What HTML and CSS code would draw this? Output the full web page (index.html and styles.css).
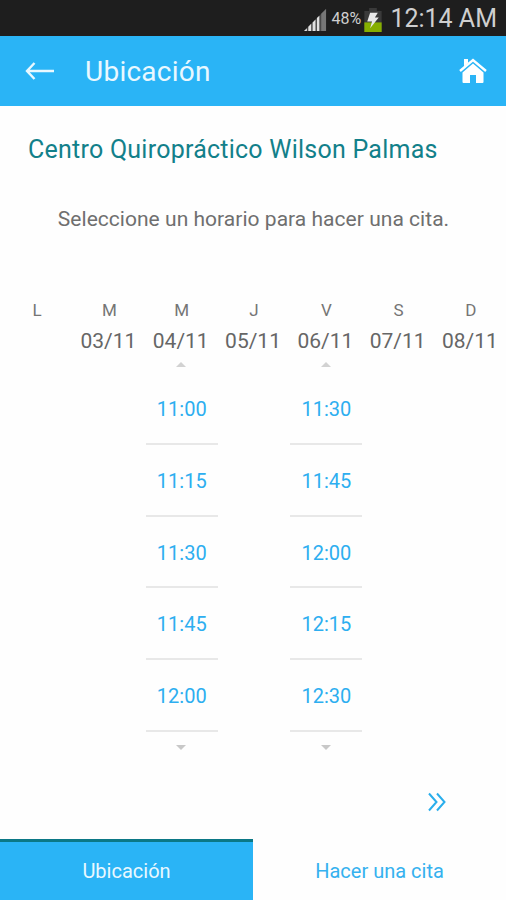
FILE: index.html
```
<!DOCTYPE html>
<html lang="es">
<head>
    <meta charset="UTF-8">
    <meta name="viewport" content="width=device-width, initial-scale=1.0">
    <title>Ubicación</title>
    <link rel="stylesheet" href="styles.css">
</head>
<body>
    <div class="status-bar">
        <svg class="signal" width="23" height="23" viewBox="0 0 24 24">
            <path d="M0 23L23 0V23Z" fill="#484848"/>
            <path d="M0 23L3 20V23ZM4.500 18.500L7.500 15.500V23H4.500ZM9 14L12 11V23H9ZM13.500 9.500L16 7V23H13.500Z" fill="#e2e2e2"/>
            <path d="M18 5L23 0V23H18Z" fill="#777"/>
        </svg>
        <span class="percent">48%</span>
        <svg class="battery" width="18" height="24" viewBox="0 0 18 25">
            <path d="M5 0H13V3H18V25H0V3H5Z" fill="#3a3a3a"/>
            <path d="M0 15H18V25H0Z" fill="#86ae00"/>
            <path d="M6 5H14L11 10H15L6 21L8 14H3Z" fill="#e8e8e8"/>
        </svg>
        <span class="clock">12:14 AM</span>
    </div>

    <header class="toolbar">
        <svg class="back" width="30" height="20" viewBox="0 0 30 20" fill="none" stroke="#e9f8ff" stroke-width="2.4">
            <path d="M9.500 2L2 10L9.500 18M2 10H29"/>
        </svg>
        <h1>Ubicación</h1>
        <svg class="home" width="28" height="26" viewBox="0 0 28 26">
            <path d="M1 13L14 2L27 13" fill="none" stroke="#fff" stroke-width="2.4"/>
            <path d="M5 1H9V5L5 8.500Z" fill="#fff"/>
            <path d="M14 5.500L24.500 14.500V24Q24.500 25 23.500 25H17V17H11V25H4.500Q3.500 25 3.500 24V14.500Z" fill="#fff"/>
        </svg>
    </header>

    <main>
        <h2>Centro Quiropráctico Wilson Palmas</h2>
        <p class="hint">Seleccione un horario para hacer una cita.</p>

        <div class="week">
            <div class="day">
                <span class="name">L</span>
            </div>
            <div class="day">
                <span class="name">M</span>
                <span class="date">03/11</span>
            </div>
            <div class="day">
                <span class="name">M</span>
                <span class="date">04/11</span>
                <span class="arrow up"></span>
                <ul class="hours">
                    <li>11:00</li>
                    <li>11:15</li>
                    <li>11:30</li>
                    <li>11:45</li>
                    <li>12:00</li>
                </ul>
                <span class="arrow down"></span>
            </div>
            <div class="day">
                <span class="name">J</span>
                <span class="date">05/11</span>
            </div>
            <div class="day">
                <span class="name">V</span>
                <span class="date">06/11</span>
                <span class="arrow up"></span>
                <ul class="hours">
                    <li>11:30</li>
                    <li>11:45</li>
                    <li>12:00</li>
                    <li>12:15</li>
                    <li>12:30</li>
                </ul>
                <span class="arrow down"></span>
            </div>
            <div class="day">
                <span class="name">S</span>
                <span class="date">07/11</span>
            </div>
            <div class="day">
                <span class="name">D</span>
                <span class="date">08/11</span>
            </div>
        </div>

        <svg class="next" width="20" height="20" viewBox="0 0 20 20" fill="none" stroke="#29aeec" stroke-width="2">
            <path d="M2 1.500L9.500 10L2 18.500M10 1.500L17.500 10L10 18.500"/>
        </svg>
    </main>

    <nav class="tabs">
        <a class="tab active">Ubicación</a>
        <a class="tab">Hacer una cita</a>
    </nav>
</body>
</html>
```
FILE: styles.css
```
* {
    box-sizing: border-box;
}
body {
    margin: 0;
    height: 900px;
    display: flex;
    flex-direction: column;
    overflow: hidden;
    background: #fefefe;
    font-family: Roboto, sans-serif;
}
.status-bar {
    height: 36px;
    display: flex;
    align-items: center;
    justify-content: flex-end;
    padding-right: 9px;
    background: #1e1e1e;
    color: #cfcfcf;
}
.signal {
    margin: 4px 4px 0 0;
}
.percent {
    width: 31px;
    font-size: 16px;
}
.battery {
    margin: 3px 8px 0 2px;
}
.clock {
    padding-top: 1px;
    font-size: 25px;
    line-height: 36px;
    white-space: nowrap;
}
.toolbar {
    height: 70px;
    display: flex;
    align-items: center;
    padding: 0 19px 0 25px;
    background: #2ab4f6;
}
h1 {
    flex: 1;
    margin: 0 0 0 30px;
    font-size: 28px;
    font-weight: 400;
    letter-spacing: 0.25px;
    color: #e9f8ff;
}
main {
    flex: 1;
    display: flex;
    flex-direction: column;
}
h2 {
    margin: 29px 0 0 28px;
    font-size: 25px;
    line-height: 30px;
    font-weight: 400;
    letter-spacing: 0.24px;
    color: #12808a;
}
.hint {
    margin: 41px 0 0 1px;
    font-size: 21px;
    line-height: 26px;
    letter-spacing: 0.03px;
    text-align: center;
    color: #6f6f6f;
}
.week {
    display: grid;
    grid-template-columns: repeat(7, 72.3px);
    margin: 68px 0 0 1px;
}
.day {
    display: flex;
    flex-direction: column;
    align-items: center;
}
.name {
    font-size: 17px;
    line-height: 20px;
    color: #757575;
}
.date {
    margin: 8px 2px 0 0;
    font-size: 21px;
    line-height: 26px;
    color: #666;
}
.arrow {
    margin-right: 1px;
    border: 5px solid transparent;
}
.up {
    margin-top: 8px;
    border-top: 0;
    border-bottom-color: #d2d2d2;
}
.down {
    margin-top: 13px;
    border-bottom: 0;
    border-top-color: #c8c8c8;
}
.hours {
    width: 100%;
    margin: 6px 0 0;
    padding: 0;
    list-style: none;
}
.hours li {
    height: 71.75px;
    border-bottom: 2px solid #e8e8e8;
    font-size: 20px;
    line-height: 72px;
    text-align: center;
    color: #2daef0;
}
.next {
    margin: 42px 0 0 427px;
}
.tabs {
    height: 61px;
    display: flex;
}
.tab {
    flex: 1;
    padding-top: 3px;
    font-size: 20px;
    line-height: 58px;
    text-align: center;
    color: #35b1ef;
}
.active {
    padding-top: 0;
    border-top: 3px solid #0b7886;
    background: #2ab4f6;
    color: #e9f8ff;
}
```
